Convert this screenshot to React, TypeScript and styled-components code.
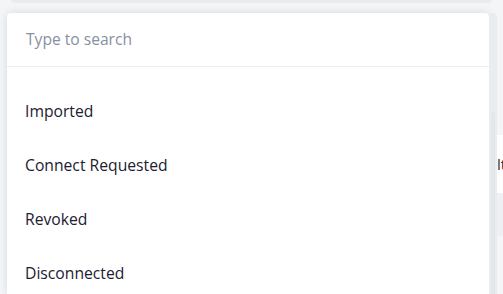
import * as React from 'react';
import styled, { createGlobalStyle } from 'styled-components';

const GlobalStyle = createGlobalStyle`
  html, body {
    margin: 0;
    padding: 0;
    background: #f3f5f7;
    font-family: "Open Sans", "Noto Sans", sans-serif;
    overflow: hidden;
  }
`;

const Page = styled.div`
  width: 503px;
  height: 294px;
  display: flex;
  flex-direction: column;
  overflow: hidden;
`;

const TopCard = styled.div`
  height: 3px;
  width: 481px;
  margin-left: 11px;
  flex: none;
  background: #e9ecef;
  border-radius: 0 0 6px 6px;
`;

const Body = styled.div`
  display: flex;
  margin-top: 10px;
  flex: 1;
  min-height: 0;
`;

const Panel = styled.div`
  margin-left: 7px;
  width: 482px;
  flex: none;
  background: #fff;
  border-radius: 4px 4px 0 0;
  box-shadow: 0 0 8px rgba(20, 30, 50, 0.12);
  display: flex;
  flex-direction: column;
`;

const SearchBox = styled.div`
  height: 54px;
  flex: none;
  box-sizing: border-box;
  border-bottom: 1px solid #eceef4;
  display: flex;
  align-items: center;
  padding: 0 19px 1px;
`;

const SearchInput = styled.input`
  flex: 1;
  border: none;
  padding: 0;
  font-family: inherit;
  font-size: 15.6px;
  color: #1f2430;
  outline: none;
  background: transparent;

  &::placeholder {
    color: #8790a2;
  }
`;

const List = styled.ul`
  list-style: none;
  margin: 0;
  padding: 17px 0 0;
`;

const Item = styled.li`
  height: 54px;
  display: flex;
  align-items: center;
  padding-left: 18px;
  font-size: 15.7px;
  color: #1c2030;
`;

const Track = styled.div`
  width: 8px;
  flex: none;
  background: #e9ecf0;
  border-radius: 4px 4px 0 0;
  display: flex;
  flex-direction: column;
  align-items: center;
`;

const Thumb = styled.div`
  margin-top: 99px;
  width: 4px;
  flex: 1;
  background: #e3e6eb;
  border-radius: 2px 2px 0 0;
`;

const Behind = styled.div`
  flex: 1;
  display: flex;
  flex-direction: column;
  margin-top: -13px;
`;

const BehindRow = styled.div<{ $h: number; $bg: string }>`
  height: ${(p) => p.$h}px;
  background: ${(p) => p.$bg};
  display: flex;
  align-items: center;
  font-size: 15px;
  color: #2a2f3a;
  overflow: hidden;
  white-space: nowrap;
`;

const statuses = ['Imported', 'Connect Requested', 'Revoked', 'Disconnected'];

export default function App() {
  return (
    <Page>
      <GlobalStyle />
      <TopCard />
      <Body>
        <Panel>
          <SearchBox>
            <SearchInput placeholder="Type to search" />
          </SearchBox>
          <List>
            {statuses.map((s) => (
              <Item key={s}>{s}</Item>
            ))}
          </List>
        </Panel>
        <Track>
          <Thumb />
        </Track>
        <Behind>
          <BehindRow $h={140} $bg="#f3f5f7" />
          <BehindRow $h={60} $bg="#ffffff">lt</BehindRow>
          <BehindRow $h={45} $bg="#eef0f3" />
          <BehindRow $h={60} $bg="#f5f6f8" />
        </Behind>
      </Body>
    </Page>
  );
}
